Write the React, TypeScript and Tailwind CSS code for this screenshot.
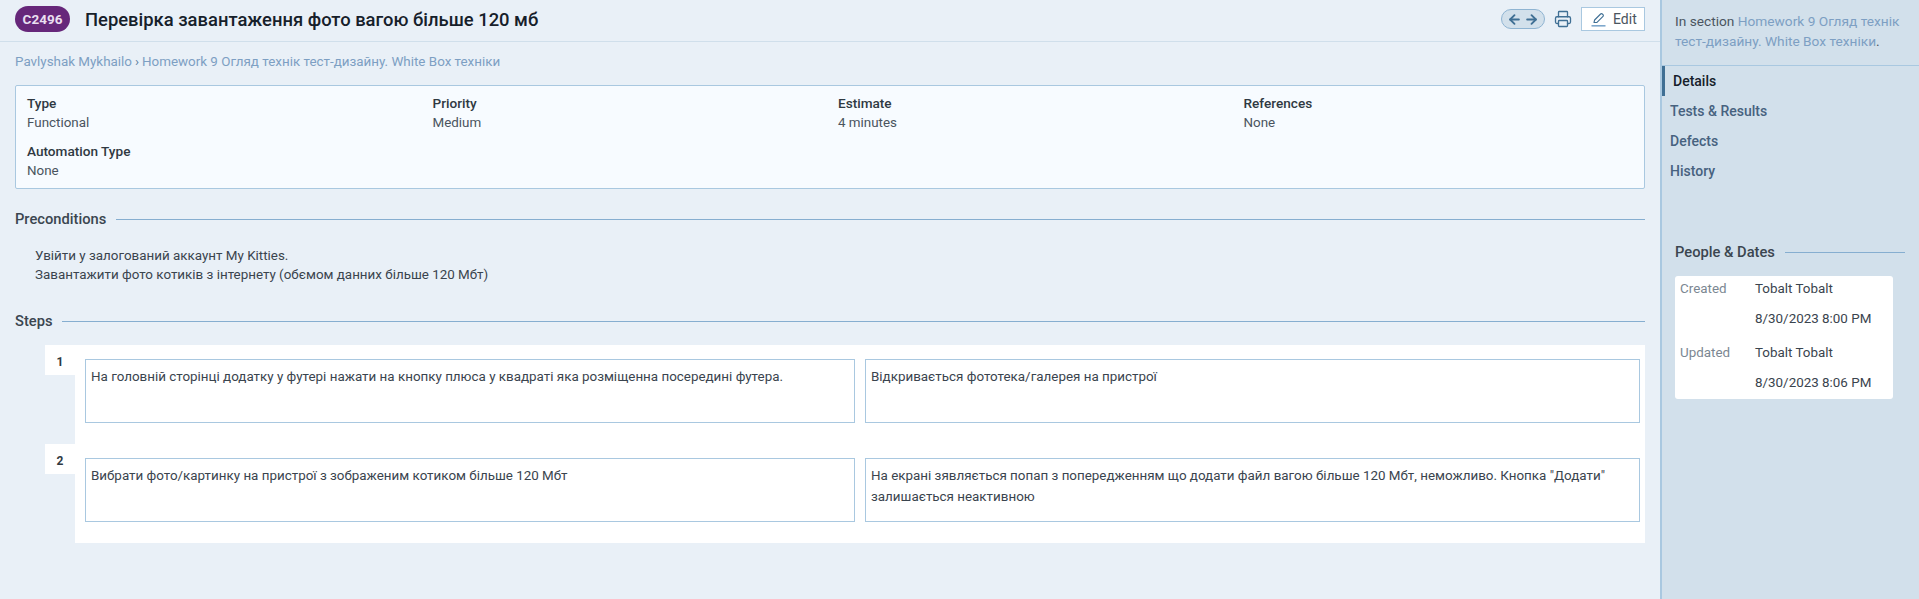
import { ArrowLeft, ArrowRight, Printer } from 'lucide-react';

const meta = [
  { label: 'Type', value: 'Functional' },
  { label: 'Priority', value: 'Medium' },
  { label: 'Estimate', value: '4 minutes' },
  { label: 'References', value: 'None' },
];

const steps = [
  {
    n: 1,
    action: 'На головній сторінці додатку у футері нажати на кнопку плюса у квадраті яка розміщенна посередині футера.',
    result: 'Відкривається фототека/галерея на пристрої',
  },
  {
    n: 2,
    action: 'Вибрати фото/картинку на пристрої з зображеним котиком більше 120 Мбт',
    result: 'На екрані зявляється попап з попередженням що додати файл вагою більше 120 Мбт, неможливо. Кнопка "Додати" залишається неактивною',
  },
];

function EditIcon() {
  return (
    <svg width="15" height="15" viewBox="0 0 15 15" fill="none" className="shrink-0">
      <path d="M3 10.5 3.6 8 9.6 2a1.2 1.2 0 0 1 1.7 0l.7.7a1.2 1.2 0 0 1 0 1.7L6 10.4l-3 .1Z" stroke="#3f6f94" strokeWidth="1.1" strokeLinejoin="round" />
      <rect x="0.5" y="13" width="14" height="1.6" fill="#7fa8cc" />
    </svg>
  );
}

function SectionTitle({ title }: { title: string }) {
  return (
    <div className="flex h-5 items-center gap-[10px]">
      <h2 className="text-[14.7px] font-medium text-[#3b4650]">{title}</h2>
      <div className="h-px flex-1 bg-[#86aed0]" />
    </div>
  );
}

export default function App() {
  return (
    <div className="flex h-[599px] w-[1919px] overflow-hidden bg-[#e9f0f7] text-[13.4px] text-[#3a444e] font-['Roboto','Noto_Sans',sans-serif]">
      <main className="w-[1660px] shrink-0">
        <header className="flex h-[42px] items-center border-b border-[#d0dfeb] pb-[3px] pl-[15px] pr-[15px]">
          <span className="flex h-[26px] w-[55px] items-center justify-center rounded-full bg-[#66277a] text-[13.5px] font-bold text-[#e9dff0]">
            C2496
          </span>
          <h1 className="ml-[15px] pt-px text-[18.4px] font-medium text-[#16202a]">Перевірка завантаження фото вагою більше 120 мб</h1>
          <div className="ml-auto flex items-center">
            <div className="flex h-5 w-11 items-center justify-center gap-[2px] rounded-full border border-[#8fb4d2] bg-[#d2e0eb] text-[#3f6f94]">
              <ArrowLeft size={15} strokeWidth={3} />
              <ArrowRight size={15} strokeWidth={3} />
            </div>
            <Printer size={18} strokeWidth={1.75} className="ml-[9px] text-[#3f6f94]" />
            <button type="button" className="ml-[9px] flex h-6 w-16 items-center gap-[7px] border border-[#a9c8e0] bg-white pl-[9px] text-[14px] text-[#4a5560]">
              <EditIcon />
              Edit
            </button>
          </div>
        </header>

        <div className="px-[15px]">
          <p className="flex h-[43px] items-center pb-[2px] text-[13.4px] text-[#7d9fc3]">
            Pavlyshak Mykhailo<span className="mx-[3px] text-[#5e7f9f]">›</span>Homework 9 Огляд технік тест-дизайну. White Box техніки
          </p>

          <section className="h-[104px] rounded-[2px] border border-[#a9c8e0] bg-[#f7fbff] pl-[11px] pt-[8px]">
            <div className="grid grid-cols-[repeat(4,405.5px)]">
              {meta.map((item) => (
                <div key={item.label} className="leading-[19px]">
                  <div className="text-[13.6px] font-medium text-[#2f3942]">{item.label}</div>
                  <div className="text-[#4a545e]">{item.value}</div>
                </div>
              ))}
            </div>
            <div className="mt-[10px] leading-[19px]">
              <div className="text-[13.6px] font-medium text-[#2f3942]">Automation Type</div>
              <div className="text-[#4a545e]">None</div>
            </div>
          </section>

          <div className="mt-[20px]">
            <SectionTitle title="Preconditions" />
          </div>
          <div className="mt-[17px] pl-5 leading-[19px]">
            <p>Увійти у залогований аккаунт My Kitties.</p>
            <p>Завантажити фото котиків з інтернету (обємом данних більше 120 Мбт)</p>
          </div>

          <div className="mt-[27px]">
            <SectionTitle title="Steps" />
          </div>
          <div className="mt-[14px] pl-[30px]">
            {steps.map((step) => (
              <div key={step.n} className="flex items-start">
                <div className="flex h-[30px] w-[30px] shrink-0 items-start justify-center bg-white pt-[8px] text-[12px] font-bold leading-[18px] text-[#2f3942]">
                  {step.n}
                </div>
                <div className="flex flex-1 gap-[10px] bg-white pb-[21px] pl-[10px] pr-[5px] pt-[14px]">
                  <div className="h-16 w-[770px] border border-[#a9c8e0] px-[5px] pt-[6px] leading-[21px]">{step.action}</div>
                  <div className="h-16 w-[775px] border border-[#a9c8e0] px-[5px] pt-[6px] leading-[21px]">{step.result}</div>
                </div>
              </div>
            ))}
          </div>
        </div>
      </main>

      <aside className="flex-1 border-l-2 border-[#a9c8e0] bg-[#d2e0eb]">
        <div className="h-[66px] border-b border-[#a9c8e0] pl-[13px] pr-[10px] pt-[11px] text-[13.7px] leading-[20px] text-[#4a5560]">
          In section <span className="text-[#7d9fc3]">Homework 9 Огляд технік тест-дизайну. White Box техніки</span>.
        </div>
        <nav className="text-[14px] font-medium text-[#47627f]">
          <div className="flex h-[30px] items-center border-l-[3px] border-[#3f6f94] pl-[8px] text-[#16202a]">Details</div>
          <div className="flex h-[30px] items-center pl-[8px]">Tests &amp; Results</div>
          <div className="flex h-[30px] items-center pl-[8px]">Defects</div>
          <div className="flex h-[30px] items-center pl-[8px]">History</div>
        </nav>
        <div className="pl-[13px] pr-[14px] pt-[56px]">
          <SectionTitle title="People & Dates" />
          <div className="mt-[14px] h-[123px] w-[218px] rounded-[3px] bg-white pl-[5px] leading-[26px]">
            <div className="flex">
              <span className="w-[75px] text-[#7b8792]">Created</span>
              <div className="flex flex-col gap-1">
                <div>Tobalt Tobalt</div>
                <div>8/30/2023 8:00 PM</div>
              </div>
            </div>
            <div className="mt-2 flex">
              <span className="w-[75px] text-[#7b8792]">Updated</span>
              <div className="flex flex-col gap-1">
                <div>Tobalt Tobalt</div>
                <div>8/30/2023 8:06 PM</div>
              </div>
            </div>
          </div>
        </div>
      </aside>
    </div>
  );
}
